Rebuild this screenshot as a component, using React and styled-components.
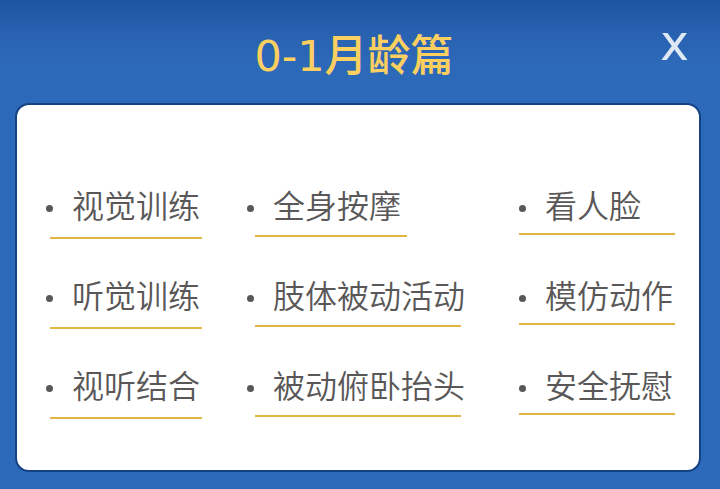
import React from "react";
import styled, { createGlobalStyle } from "styled-components";

const GlobalStyle = createGlobalStyle`
  *, *::before, *::after { box-sizing: border-box; }
  body { margin: 0; background: #2c69b8; }
`;

const Page = styled.main`
  min-height: 100vh;
  padding: 0 19px 17px 15px;
  background: linear-gradient(#1e55a2 0, #2861b0 30px, #2c69b8 64px);
  font-family: "Noto Sans CJK SC", sans-serif;
`;

const Header = styled.header`
  display: grid;
  grid-template-columns: 1fr auto 1fr;
  align-items: center;
  height: 103px;
  padding: 0 8px 0 0;
`;

const Title = styled.h1`
  grid-column: 2;
  margin: 0;
  padding-top: 8px;
  color: #fccf61;
  font-family: "DejaVu Sans", "Noto Sans CJK SC", sans-serif;
  font-size: 43px;
  font-weight: 500;
  line-height: 60px;
  white-space: nowrap;
`;

const CloseButton = styled.button`
  justify-self: end;
  margin: 0;
  padding: 0 4px 16px;
  border: 0;
  background: none;
  color: #dfe9f6;
  font-family: "DejaVu Sans", sans-serif;
  font-size: 49px;
  line-height: 48px;
  cursor: pointer;
`;

const Panel = styled.section`
  display: grid;
  grid-template-columns: 201fr 272fr 180fr;
  padding: 78px 0 17px 29px;
  border: 2px solid #154284;
  border-radius: 14px;
  background: #fff;
`;

const Column = styled.ul`
  min-width: 0;
  margin: 0;
  padding: 0;
  list-style: none;
`;

const Item = styled.li`
  height: 90px;
`;

const TopicLink = styled.a`
  display: block;
  color: #595757;
  font-size: 32px;
  font-weight: 350;
  line-height: 42px;
  text-decoration: none;
  white-space: nowrap;
`;

const Label = styled.span`
  display: flex;
  align-items: center;
  gap: 19px;

  &::before {
    content: "";
    width: 7px;
    height: 7px;
    margin-top: 9px;
    border-radius: 50%;
    background: #595757;
  }
`;

const Rule = styled.span`
  display: block;
  width: ${({ $width }) => $width}px;
  height: 2px;
  margin: ${({ $gap }) => $gap}px 0 0 ${({ $inset }) => $inset}px;
  background: #e2b741;
`;

const columns = [
  {
    gap: 12,
    inset: 4,
    topics: [
      { name: "视觉训练", rule: 152 },
      { name: "听觉训练", rule: 152 },
      { name: "视听结合", rule: 152 },
    ],
  },
  {
    gap: 10,
    inset: 8,
    topics: [
      { name: "全身按摩", rule: 152 },
      { name: "肢体被动活动", rule: 206 },
      { name: "被动俯卧抬头", rule: 206 },
    ],
  },
  {
    gap: 8,
    inset: 0,
    topics: [
      { name: "看人脸", rule: 156 },
      { name: "模仿动作", rule: 156 },
      { name: "安全抚慰", rule: 156 },
    ],
  },
];

export default function App() {
  return (
    <>
      <GlobalStyle />
      <Page>
        <Header>
          <Title>0-1月龄篇</Title>
          <CloseButton type="button">x</CloseButton>
        </Header>
        <Panel>
          {columns.map((column) => (
            <Column key={column.topics[0].name}>
              {column.topics.map((topic) => (
                <Item key={topic.name}>
                  <TopicLink href="#">
                    <Label>{topic.name}</Label>
                    <Rule $width={topic.rule} $gap={column.gap} $inset={column.inset} />
                  </TopicLink>
                </Item>
              ))}
            </Column>
          ))}
        </Panel>
      </Page>
    </>
  );
}
